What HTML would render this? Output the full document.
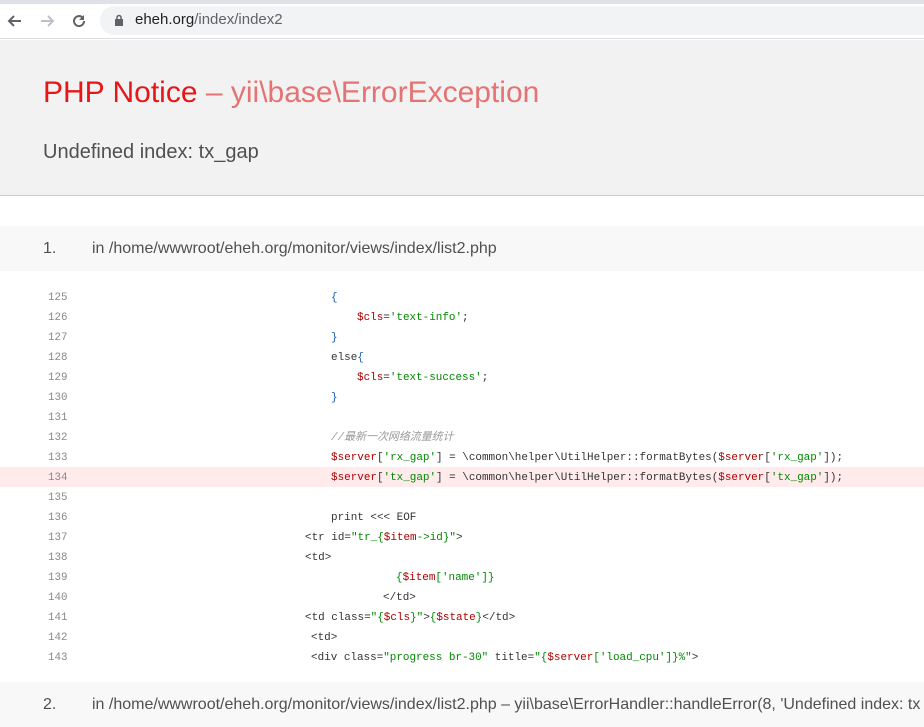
<!DOCTYPE html>
<html><head><meta charset="utf-8"><style>
*{margin:0;padding:0;box-sizing:border-box}
body{width:924px;height:702px;overflow:hidden;background:#fff;font-family:"Liberation Sans",Arial,sans-serif;position:relative}
.top{position:absolute;left:0;top:0;width:924px;height:4px;background:#dee1e6}
.bar{position:absolute;left:0;top:4px;width:924px;height:35px;background:#fff;border-bottom:1px solid #dadce0}
.omni{position:absolute;left:100px;top:6px;width:840px;height:29px;border-radius:15px;background:#f1f3f4}
.url{position:absolute;left:135px;top:11px;font-size:15px;color:#202124}
.url span{color:#5f6368}
.hdr{position:absolute;left:0;top:40px;width:924px;height:156px;background:#f2f2f2;border-bottom:1px solid #ccc}
h1{position:absolute;left:43px;top:76px;font-size:30px;font-weight:normal;color:#e51717;white-space:nowrap}
h1 span{color:#e57373}
h2{position:absolute;left:43px;top:141px;font-size:20px;font-weight:normal;color:#505050}
.row{position:absolute;left:0;width:924px;height:45px;background:#f8f8f8;font-size:16px;color:#505050;white-space:nowrap}
.row b{font-weight:normal;position:absolute;left:43px;top:14px}
.row i{font-style:normal;position:absolute;left:92px;top:14px}
.hl{position:absolute;left:0;top:467px;width:924px;height:20px;background:#ffebeb}
.ln{position:absolute;left:48px;font:10.8px/20px "Liberation Mono",monospace;color:#888}
.c{position:absolute;font:10.95px/20px "Liberation Mono",monospace;color:#333;white-space:pre}
.v{color:#a00}.s{color:#080}.p{color:#1c5bb5}.m{color:#999;font-style:italic}
</style></head><body>
<div class="top"></div>
<div class="bar"></div>
<div class="omni"></div>
<svg style="position:absolute;left:6px;top:12px" width="18" height="18" viewBox="0 0 18 18"><path d="M15 9H3M8 4L3 9l5 5" stroke="#5f6368" stroke-width="2" fill="none"/></svg>
<svg style="position:absolute;left:38px;top:12px" width="18" height="18" viewBox="0 0 18 18"><path d="M3 9h12M10 4l5 5-5 5" stroke="#bdc1c6" stroke-width="2" fill="none"/></svg>
<svg style="position:absolute;left:70px;top:12px" width="18" height="18" viewBox="0 0 18 18"><path d="M14 9a5 5 0 1 1-1.5-3.5" stroke="#5f6368" stroke-width="2" fill="none"/><path d="M14 3v5h-5z" fill="#5f6368"/></svg>
<svg style="position:absolute;left:114px;top:14px" width="10" height="12" viewBox="0 0 10 12"><rect x="1" y="5" width="8" height="7" fill="#5f6368"/><path d="M3 5V3.5a2 2 0 0 1 4 0V5" stroke="#5f6368" stroke-width="1.5" fill="none"/></svg>
<div class="url">eheh.org<span>/index/index2</span></div>
<div class="hdr"></div>
<h1>PHP Notice <span>– yii\base\ErrorException</span></h1>
<h2>Undefined index: tx_gap</h2>
<div class="row" style="top:226px"><b>1.</b><i>in /home/wwwroot/eheh.org/monitor/views/index/list2.php</i></div>
<div class="hl"></div>
<div class="ln" style="top:288px">125<br>126<br>127<br>128<br>129<br>130<br>131<br>132<br>133<br>134<br>135<br>136<br>137<br>138<br>139<br>140<br>141<br>142<br>143</div>
<div class="c" style="left:331px;top:288px"><span class="p">{</span></div>
<div class="c" style="left:357px;top:308px"><span class="v">$cls</span>=<span class="s">'text-info'</span>;</div>
<div class="c" style="left:331px;top:328px"><span class="p">}</span></div>
<div class="c" style="left:331px;top:348px">else<span class="p">{</span></div>
<div class="c" style="left:357px;top:368px"><span class="v">$cls</span>=<span class="s">'text-success'</span>;</div>
<div class="c" style="left:331px;top:388px"><span class="p">}</span></div>
<div class="c" style="left:331px;top:428px"><span class="m">//最新一次网络流量统计</span></div>
<div class="c" style="left:331px;top:448px"><span class="v">$server</span>[<span class="s">'rx_gap'</span>] = \common\helper\UtilHelper::formatBytes(<span class="v">$server</span>[<span class="s">'rx_gap'</span>]);</div>
<div class="c" style="left:331px;top:468px"><span class="v">$server</span>[<span class="s">'tx_gap'</span>] = \common\helper\UtilHelper::formatBytes(<span class="v">$server</span>[<span class="s">'tx_gap'</span>]);</div>
<div class="c" style="left:331px;top:508px">print &lt;&lt;&lt; EOF</div>
<div class="c" style="left:305px;top:528px">&lt;tr id=<span class="s">"tr_{<span class="v">$item</span>-&gt;id}"</span>&gt;</div>
<div class="c" style="left:305px;top:548px">&lt;td&gt;</div>
<div class="c" style="left:396px;top:568px"><span class="s">{<span class="v">$item</span>['name']}</span></div>
<div class="c" style="left:383px;top:588px">&lt;/td&gt;</div>
<div class="c" style="left:305px;top:608px">&lt;td class=<span class="s">"{<span class="v">$cls</span>}"</span>&gt;<span class="s">{<span class="v">$state</span>}</span>&lt;/td&gt;</div>
<div class="c" style="left:311px;top:628px">&lt;td&gt;</div>
<div class="c" style="left:311px;top:648px">&lt;div class=<span class="s">"progress br-30"</span> title=<span class="s">"{<span class="v">$server</span>['load_cpu']}%"</span>&gt;</div>
<div class="row" style="top:682px"><b>2.</b><i>in /home/wwwroot/eheh.org/monitor/views/index/list2.php – yii\base\ErrorHandler::handleError(8, 'Undefined index: tx</i></div>
</body></html>
